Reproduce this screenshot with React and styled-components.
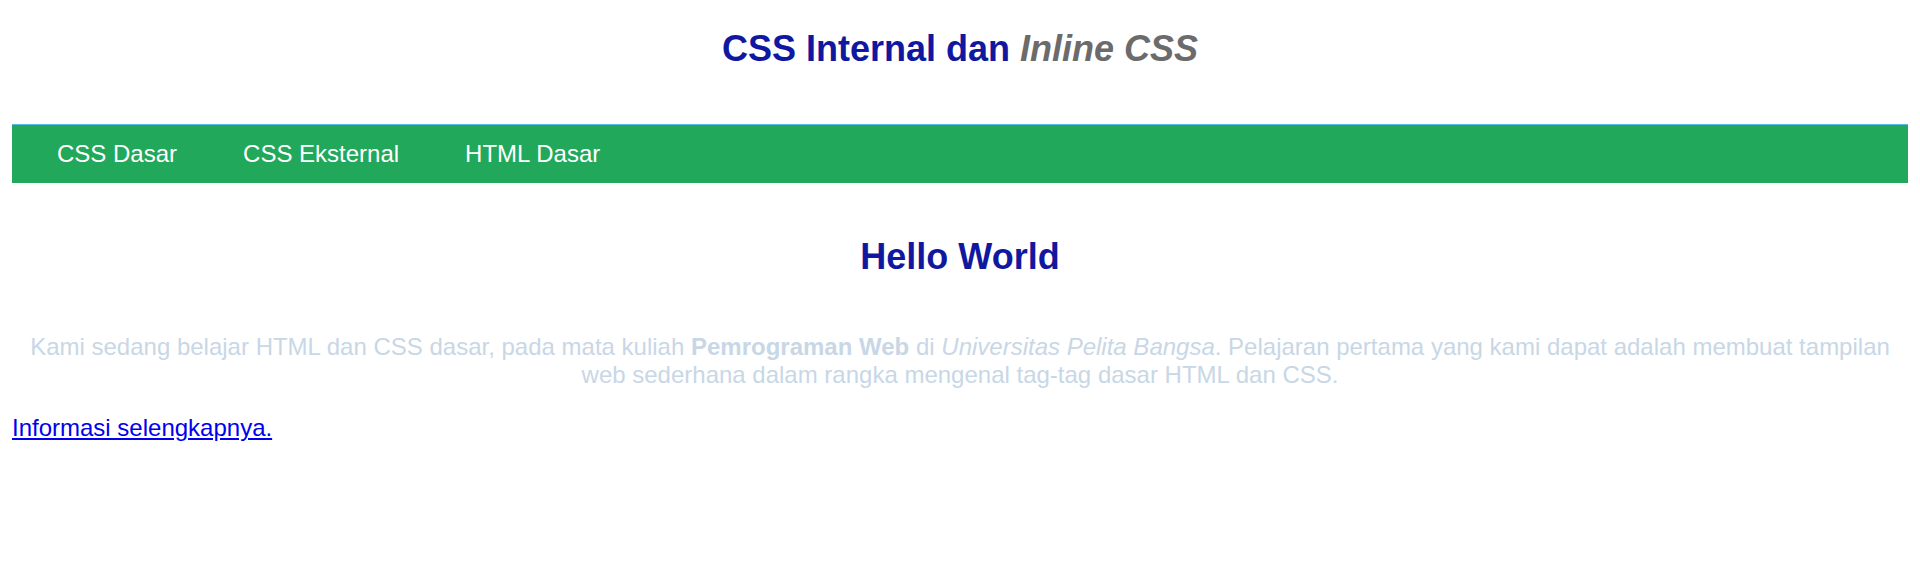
import React from "react";
import styled, { createGlobalStyle } from "styled-components";

const GlobalStyle = createGlobalStyle`
    html, body {
        margin: 0;
        padding: 0;
        background: #ffffff;
    }
    body {
        font-family: "Liberation Sans", Arial, sans-serif;
    }
`;

const menu = ["CSS Dasar", "CSS Eksternal", "HTML Dasar"];

function App() {
    return (
        <>
            <GlobalStyle />
            <Page>
                <Header>
                    <Title>
                        CSS Internal dan <Accent>Inline CSS</Accent>
                    </Title>
                </Header>
                <Nav>
                    {menu.map((item) => (
                        <NavLink key={item} href="#">
                            {item}
                        </NavLink>
                    ))}
                </Nav>
                <Main>
                    <Heading>Hello World</Heading>
                    <Intro>
                        Kami sedang belajar HTML dan CSS dasar, pada mata
                        kuliah <strong>Pemrograman Web</strong> di{" "}
                        <em>Universitas Pelita Bangsa</em>. Pelajaran pertama
                        yang kami dapat adalah membuat tampilan web sederhana
                        dalam rangka mengenal tag-tag dasar HTML dan CSS.
                    </Intro>
                    <More>
                        <MoreLink href="#">Informasi selengkapnya.</MoreLink>
                    </More>
                </Main>
            </Page>
        </>
    );
}

const Page = styled.div`
    padding: 0 12px 40px;
`;

const Header = styled.header`
    padding-top: 28px;
`;

const Title = styled.h1`
    margin: 0;
    text-align: center;
    font-size: 36px;
    line-height: 42px;
    font-weight: bold;
    color: #1118a0;
`;

const Accent = styled.i`
    color: #6b6b6b;
`;

const Nav = styled.nav`
    display: flex;
    align-items: center;
    margin-top: 54px;
    height: 58px;
    padding-left: 12px;
    border-top: 1px solid #5cb8e4;
    background: #21a85b;
`;

const NavLink = styled.a`
    padding: 0 33px;
    font-size: 24px;
    line-height: 28px;
    color: #ffffff;
    text-decoration: none;
`;

const Main = styled.main`
    display: flex;
    flex-direction: column;
`;

const Heading = styled.h2`
    margin: 53px 0 0;
    text-align: center;
    font-size: 36px;
    line-height: 42px;
    font-weight: bold;
    color: #1118a0;
`;

const Intro = styled.p`
    margin: 55px 0 0;
    text-align: center;
    font-size: 24px;
    line-height: 28px;
    color: #c8d7e6;
`;

const More = styled.p`
    margin: 25px 0 0;
    font-size: 24px;
    line-height: 28px;
`;

const MoreLink = styled.a`
    color: #0000ee;
    text-decoration: underline;
`;

export default App;
